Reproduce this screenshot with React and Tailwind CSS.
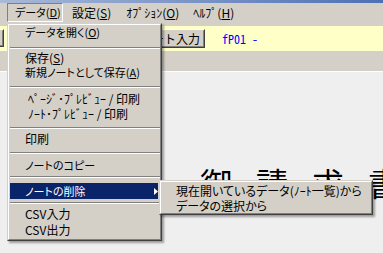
const jp = "font-['Noto_Sans_CJK_JP',sans-serif]";

function Row({ children, className = '', h = 'h-[15px]', size = 'text-[12px]' }) {
  return (
    <div className={`${h} ${size} flex items-center pl-[15px] leading-none whitespace-nowrap ${className}`}>
      {children}
    </div>
  );
}

function Sep({ className = '' }) {
  return <div className={`h-[2px] border-t border-[#808080] border-b border-b-white -mr-[2px] ${className}`} />;
}

function Raised({ className = '', children }) {
  return (
    <div className={`border border-t-white border-l-white border-r-[#404040] border-b-[#404040] ${className}`}>
      <div className="h-full border border-transparent border-r-[#808080] border-b-[#808080]">{children}</div>
    </div>
  );
}

export default function App() {
  return (
    <div className={`relative w-[383px] h-[253px] overflow-hidden bg-[#d4d0c8] text-black ${jp}`}>
      <div className="flex flex-col h-full">
        <div className="h-[3px] bg-gradient-to-r from-[#a9b9d8] to-[#4d70b4]" />

        {/* menu bar */}
        <div className="h-[19px] flex items-stretch pl-[7px] text-[12px] leading-none whitespace-nowrap">
          <div className="flex-none w-[56px] flex items-center pl-[7px] text-[11px] [font-feature-settings:'palt'] border border-t-[#808080] border-l-[#808080] border-r-white border-b-white">
            データ(<u>D</u>)
          </div>
          <div className="flex items-center pl-[9px] pr-[15px]">設定(<u>S</u>)</div>
          <div className="flex items-center pr-[14px]">ｵﾌﾟｼｮﾝ(<u>O</u>)</div>
          <div className="flex items-center">ﾍﾙﾌﾟ(<u>H</u>)</div>
        </div>

        <div className="h-[4px]" />

        {/* toolbar */}
        <div className="h-[25px] bg-[#ffffc8] flex items-start pt-[3px]">
          <Raised className="w-[40px] h-[18px] -ml-[36px] bg-[#d4d0c8]" />
          <Raised className="w-[70px] h-[19px] ml-[131px] bg-[#d4d0c8]">
            <div className="h-full flex items-center justify-center text-[12px] leading-none">ノート入力</div>
          </Raised>
          <div className="ml-[17px] mt-[4px] text-[12px] leading-none text-[#0000ff] font-['Noto_Sans_Mono_CJK_JP','Liberation_Mono',monospace]">
            fP01 -
          </div>
        </div>

        <div className="h-[20px]" />

        {/* document area */}
        <div className="flex-1 border-t border-white bg-[#efefef]">
          <div className="flex gap-[24px] pl-[200px] pt-[94px] text-[32px] leading-none">
            <span>御</span>
            <span>請</span>
            <span>求</span>
            <span>書</span>
          </div>
        </div>
      </div>

      {/* dropdown menu */}
      <div className="absolute left-[7px] top-[23px] w-[155px] h-[218px] bg-[#d4d0c8] border border-t-[#d4d0c8] border-l-[#d4d0c8] border-r-[#404040] border-b-[#404040] shadow-[2px_2px_2px_rgba(0,0,0,0.35)]">
        <div className="h-full border border-t-white border-l-white border-r-[#808080] border-b-[#808080] pl-[1px] pr-[2px] [font-feature-settings:'palt']">
          <Row size="text-[11px]">データを開く(<u>O</u>)</Row>
          <Sep className="mt-[7px]" />
          <Row className="mt-[1px]">保存(<u>S</u>)</Row>
          <Row size="text-[11px]">新規ノートとして保存(<u>A</u>)</Row>
          <Sep className="mt-[6px]" />
          <Row className="mt-[3px] pl-[18px]">ﾍﾟｰｼﾞ･ﾌﾟﾚﾋﾞｭｰ / 印刷</Row>
          <Row className="pl-[18px]">ﾉｰﾄ･ﾌﾟﾚﾋﾞｭｰ / 印刷</Row>
          <Sep className="mt-[6px]" />
          <Row className="mt-[2px]">印刷</Row>
          <Sep className="mt-[6px]" />
          <Row size="text-[11px]" className="mt-[4px]">ノートのコピー</Row>
          <Sep className="mt-[3px]" />
          <Row h="h-[16px]" size="text-[11px]" className="mt-[5px] bg-[#0a246a] text-white">
            <span>ノートの削除</span>
            <svg className="ml-auto" width="4" height="7" viewBox="0 0 4 7">
              <path d="M0 0 L4 3.5 L0 7 Z" fill="#fff" />
            </svg>
          </Row>
          <Sep className="mt-[3px]" />
          <Row h="h-[16px]" className="mt-[2px]">CSV入力</Row>
          <Row h="h-[16px]">CSV出力</Row>
        </div>
      </div>

      {/* submenu */}
      <div className="absolute left-[159px] top-[180px] w-[214px] h-[35px] bg-[#d4d0c8] border border-t-[#d4d0c8] border-l-[#d4d0c8] border-r-[#404040] border-b-[#404040] shadow-[2px_2px_2px_rgba(0,0,0,0.35)]">
        <div className="h-full border border-t-white border-l-white border-r-[#808080] border-b-[#808080] pt-[1px] [font-feature-settings:'palt']">
          <Row>現在開いているデータ(ﾉｰﾄ一覧)から</Row>
          <Row>データの選択から</Row>
        </div>
      </div>
    </div>
  );
}
